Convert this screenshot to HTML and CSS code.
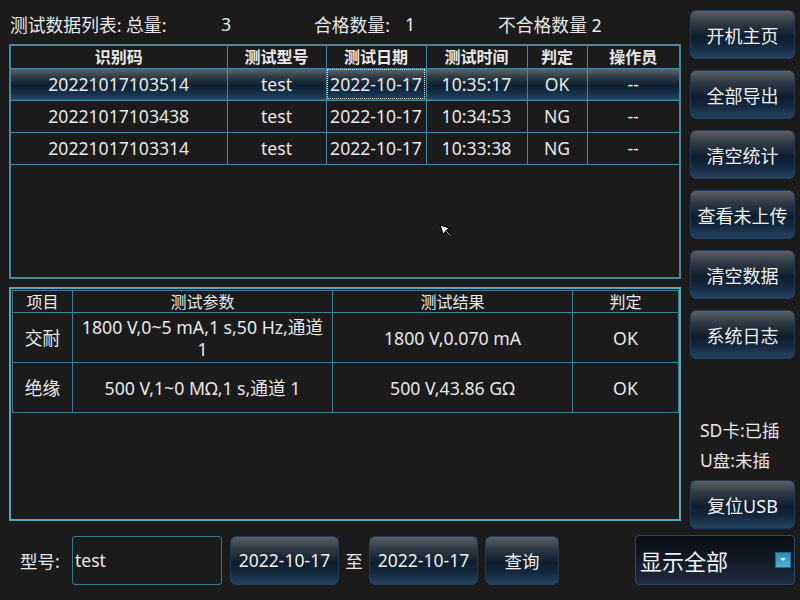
FILE: index.html
```html
<!DOCTYPE html>
<html lang="zh-CN">
<head>
    <meta charset="UTF-8" />
    <title>测试数据列表</title>
    <link rel="stylesheet" href="styles.css">
</head>
<body>
<div class="screen">
    <div class="upper">
        <div class="left">
            <!-- Resumen de conteos -->
            <div class="summary">
                <span class="s-label s-total">测试数据列表: 总量:</span>
                <span class="s-num">3</span>
                <span class="s-label s-pass">合格数量:</span>
                <span class="s-num">1</span>
                <span class="s-label">不合格数量 2</span>
            </div>

            <div class="list-frame">
                <table class="list">
                    <colgroup>
                        <col style="width:216px"><col style="width:99px"><col style="width:100px">
                        <col style="width:101px"><col style="width:60px"><col style="width:92px">
                    </colgroup>
                    <tr class="list-head">
                        <th>识别码</th><th>测试型号</th><th>测试日期</th><th>测试时间</th><th>判定</th><th>操作员</th>
                    </tr>
                    <tr class="current">
                        <td>20221017103514</td><td>test</td><td class="focus">2022-10-17</td><td>10:35:17</td><td>OK</td><td>--</td>
                    </tr>
                    <tr>
                        <td>20221017103438</td><td>test</td><td>2022-10-17</td><td>10:34:53</td><td>NG</td><td>--</td>
                    </tr>
                    <tr>
                        <td>20221017103314</td><td>test</td><td>2022-10-17</td><td>10:33:38</td><td>NG</td><td>--</td>
                    </tr>
                </table>
            </div>

            <div class="detail-frame">
                <table class="detail">
                    <colgroup>
                        <col style="width:60px"><col style="width:260px"><col style="width:240px"><col style="width:106px">
                    </colgroup>
                    <tr class="detail-head">
                        <th>项目</th><th>测试参数</th><th>测试结果</th><th>判定</th>
                    </tr>
                    <tr>
                        <td>交耐</td><td>1800 V,0~5 mA,1 s,50 Hz,通道<br>1</td><td>1800 V,0.070 mA</td><td>OK</td>
                    </tr>
                    <tr>
                        <td>绝缘</td><td>500 V,1~0 MΩ,1 s,通道 1</td><td>500 V,43.86 GΩ</td><td>OK</td>
                    </tr>
                </table>
            </div>
        </div>

        <div class="side">
            <button class="btn side-btn">开机主页</button>
            <button class="btn side-btn">全部导出</button>
            <button class="btn side-btn">清空统计</button>
            <button class="btn side-btn">查看未上传</button>
            <button class="btn side-btn">清空数据</button>
            <button class="btn side-btn">系统日志</button>
            <div class="status">
                <div>SD卡:已插</div>
                <div>U盘:未插</div>
            </div>
            <button class="btn side-btn">复位USB</button>
        </div>
    </div>

    <!-- Filtro inferior -->
    <div class="filter">
        <label class="f-label" for="modelo">型号:</label>
        <input type="text" id="modelo" class="f-input" value="test" />
        <button class="btn date-btn">2022-10-17</button>
        <span class="f-to">至</span>
        <button class="btn date-btn">2022-10-17</button>
        <button class="btn query-btn">查询</button>
        <div class="select">
            <span>显示全部</span>
            <span class="select-arrow"></span>
        </div>
    </div>

    <svg class="cursor" width="15" height="15" viewBox="0 0 14 14">
        <polygon points="1,1 10,4 7,6 12,11 11,12 6,7 4,10" fill="#fff" stroke="#000" stroke-width="1" stroke-linejoin="miter"/>
    </svg>
</div>
</body>
</html>
```

FILE: styles.css
```css
* {
    box-sizing: border-box;
    margin: 0;
    padding: 0;
}

body {
    background: #1b1b1b;
    font-family: "Noto Sans", "Noto Sans CJK SC", sans-serif;
    color: #e8e8e8;
}

.screen {
    position: relative;
    width: 800px;
    height: 600px;
    overflow: hidden;
}

.upper {
    display: flex;
    height: 529px;
}

.left {
    width: 672px;
    margin-left: 9px;
}

/* Summary line */
.summary {
    height: 44px;
    padding-top: 3px;
    padding-left: 1px;
    display: flex;
    align-items: center;
    font-size: 17.8px;
    white-space: nowrap;
}

.s-total {
    width: 211px;
}

.s-num {
    width: 93px;
}

.s-pass {
    width: 91px;
}

/* Record list */
.list-frame {
    height: 235px;
    border: 2px solid #4a8797;
}

.list,
.detail {
    border-collapse: collapse;
    table-layout: fixed;
    width: 100%;
}

.list {
    border-width: 1px;
    border-style: hidden hidden solid hidden;
    border-color: #4a8797;
}

.list th,
.list td {
    border: 1px solid #4a8797;
    text-align: center;
    white-space: nowrap;
    overflow: hidden;
}

.list-head th {
    height: 22px;
    font-size: 16px;
    font-weight: bold;
    line-height: 20px;
}

.list td {
    height: 32px;
    font-size: 17.6px;
    line-height: 30px;
}

.list tr.current td {
    background: linear-gradient(to bottom, #62676b 0%, #2c3a46 28%, #0d1f30 55%, #16304a 80%, #234262 100%);
}

.list td.focus {
    outline: 1px dotted #d8d8d8;
    outline-offset: -2px;
}

/* Detail table */
.detail-frame {
    height: 234px;
    margin-top: 8px;
    border: 2px solid #5aa5b8;
    padding: 1px;
}

.detail {
    border: 1px solid #3f808f;
}

.detail th,
.detail td {
    border: 1px solid #3f808f;
    text-align: center;
}

.detail-head th {
    height: 22px;
    font-size: 16px;
    font-weight: normal;
    line-height: 20px;
}

.detail td {
    height: 50px;
    font-size: 17.7px;
    line-height: 22px;
}

/* Buttons */
.btn {
    font-family: "Noto Sans", "Noto Sans CJK SC", sans-serif;
    color: #f0f0f0;
    font-size: 17.5px;
    border: 1px solid #233a58;
    border-radius: 6px;
    background: linear-gradient(to bottom, #5c6064 0%, #2f3a45 25%, #0d1d2d 55%, #14293f 75%, #25435f 100%);
    cursor: pointer;
}

.side {
    width: 105px;
    margin-left: 9px;
    padding-top: 10px;
    display: flex;
    flex-direction: column;
}

.side-btn {
    height: 49px;
    font-size: 18px;
}

.side-btn + .side-btn {
    margin-top: 11px;
}

.status {
    margin-top: auto;
    margin-bottom: 5px;
    padding-left: 10px;
    font-size: 17.5px;
    line-height: 30px;
}

.status + .side-btn {
    margin-top: 0;
}

/* Filter bar */
.filter {
    display: flex;
    align-items: center;
    height: 50px;
    margin-top: 6px;
    padding-left: 20px;
}

.f-label {
    width: 52px;
    font-size: 17.5px;
}

.f-input {
    width: 150px;
    height: 49px;
    background: #1b1b1b;
    border: 1px solid #3d7a88;
    border-radius: 3px;
    color: #e8e8e8;
    font-family: "Noto Sans", "Noto Sans CJK SC", sans-serif;
    font-size: 17.5px;
    padding-left: 2px;
}

.date-btn {
    width: 109px;
    height: 49px;
}

.f-input + .date-btn {
    margin-left: 8px;
}

.f-to {
    width: 30px;
    text-align: center;
    font-size: 17.5px;
}

.query-btn {
    width: 74px;
    height: 49px;
    margin-left: 7px;
}

.select {
    margin-left: auto;
    margin-right: 5px;
    width: 160px;
    height: 50px;
    border: 1px solid #2e4868;
    border-radius: 4px;
    background: linear-gradient(to bottom, #0a0e14 0%, #121a26 50%, #1f2d42 100%);
    display: flex;
    align-items: center;
    justify-content: space-between;
    padding: 0 3px 0 4px;
    font-size: 22px;
    color: #f2f2f2;
}

.select-arrow {
    position: relative;
    width: 16px;
    height: 16px;
    background: linear-gradient(to bottom, #2e8cb5, #4cb3db);
    border: 1px solid #1d6a8c;
}

.select-arrow::after {
    content: "";
    position: absolute;
    left: 4px;
    top: 5px;
    border-left: 3px solid transparent;
    border-right: 3px solid transparent;
    border-top: 3px solid #fff;
}

.cursor {
    position: absolute;
    left: 439px;
    top: 224px;
}
```
